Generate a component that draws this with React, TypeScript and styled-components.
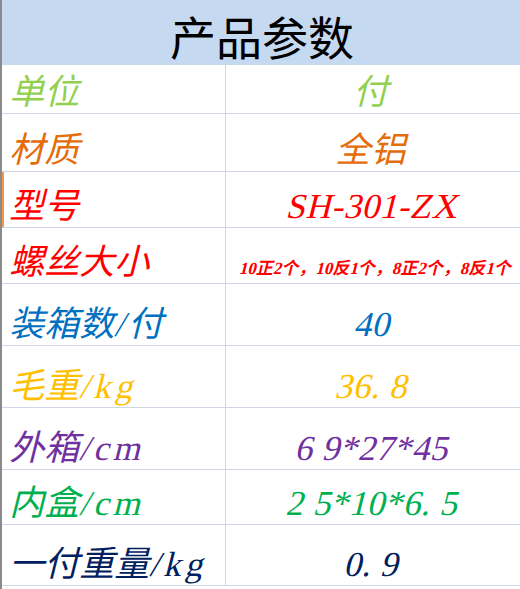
import styled, { createGlobalStyle } from "styled-components"

const GlobalStyle = createGlobalStyle`
  html, body {
    margin: 0;
    padding: 0;
    background: #ffffff;
  }
`

const Sheet = styled.div`
  width: 520px;
  height: 589px;
  display: grid;
  grid-template-columns: 224px 296px;
  grid-template-rows: 65px 49px 58px 56px 56px 62px 62px 62px 55px 61px;
  align-content: start;
  border-left: 2px solid #8a8a8a;
  box-sizing: border-box;
  font-family: "Liberation Serif", "Noto Sans CJK SC", serif;
`

const Header = styled.div`
  grid-column: 1 / span 2;
  background: #c5d9f1;
  display: flex;
  justify-content: center;
  align-items: center;
  padding-top: 4px;
  font-family: "Noto Sans CJK SC", sans-serif;
  font-size: 46px;
  line-height: 1;
  color: #000000;
  box-sizing: border-box;
`

const Cell = styled.div<{ $color: string; $edge?: string }>`
  display: flex;
  align-items: flex-end;
  padding-bottom: 0;
  border-bottom: 1px solid #cfd6e6;
  border-right: 1px solid #cfd6e6;
  box-sizing: border-box;
  color: ${(p) => p.$color};
  font-size: 35px;
  line-height: 1.15;
  white-space: nowrap;
  overflow: hidden;
`

const Label = styled(Cell)`
  padding-left: 10px;
  box-shadow: ${(p) => (p.$edge ? `inset 2px 0 0 ${p.$edge}` : "none")};
`

const Value = styled(Cell)<{ $small?: boolean }>`
  justify-content: center;
  font-size: ${(p) => (p.$small ? "17px" : "35px")};
  font-weight: ${(p) => (p.$small ? 700 : 400)};
  padding-bottom: ${(p) => (p.$small ? "4px" : "0")};
  padding-left: ${(p) => (p.$small ? "4px" : "0")};
  letter-spacing: ${(p) => (p.$small ? "0" : "0.5px")};
`

// the sheet uses a synthetic oblique, for CJK and latin alike
const Slant = styled.span`
  display: inline-block;
  transform: skewX(-14deg);
`

// half-width unit text is wider in the sheet's font
const Unit = styled.span`
  letter-spacing: 4px;
`

type Row = {
  label: string
  unit?: string
  value: string
  color: string
  small?: boolean
  edge?: string
}

const rows: Row[] = [
  { label: "单位", value: "付", color: "#92d050" },
  { label: "材质", value: "全铝", color: "#e46c0a" },
  { label: "型号", value: "SH-301-ZX", color: "#ff0000", edge: "#f79646" },
  {
    label: "螺丝大小",
    value: "10正2个，10反1个，8正2个，8反1个",
    color: "#ff0000",
    small: true,
  },
  { label: "装箱数", unit: "/付", value: "40", color: "#0070c0" },
  { label: "毛重", unit: "/kg", value: "36. 8", color: "#ffc000" },
  { label: "外箱", unit: "/cm", value: "6 9*27*45", color: "#7030a0" },
  { label: "内盒", unit: "/cm", value: "2 5*10*6. 5", color: "#00b050" },
  { label: "一付重量", unit: "/kg", value: "0. 9", color: "#002060" },
]

export default function App() {
  return (
    <>
      <GlobalStyle />
      <Sheet>
        <Header>产品参数</Header>
        {rows.flatMap((r) => [
          <Label key={r.label} $color={r.color} $edge={r.edge}>
            <Slant>
              {r.label}
              {r.unit && <Unit>{r.unit}</Unit>}
            </Slant>
          </Label>,
          <Value key={r.label + "-v"} $color={r.color} $small={r.small}>
            <Slant>{r.value}</Slant>
          </Value>,
        ])}
      </Sheet>
    </>
  )
}
